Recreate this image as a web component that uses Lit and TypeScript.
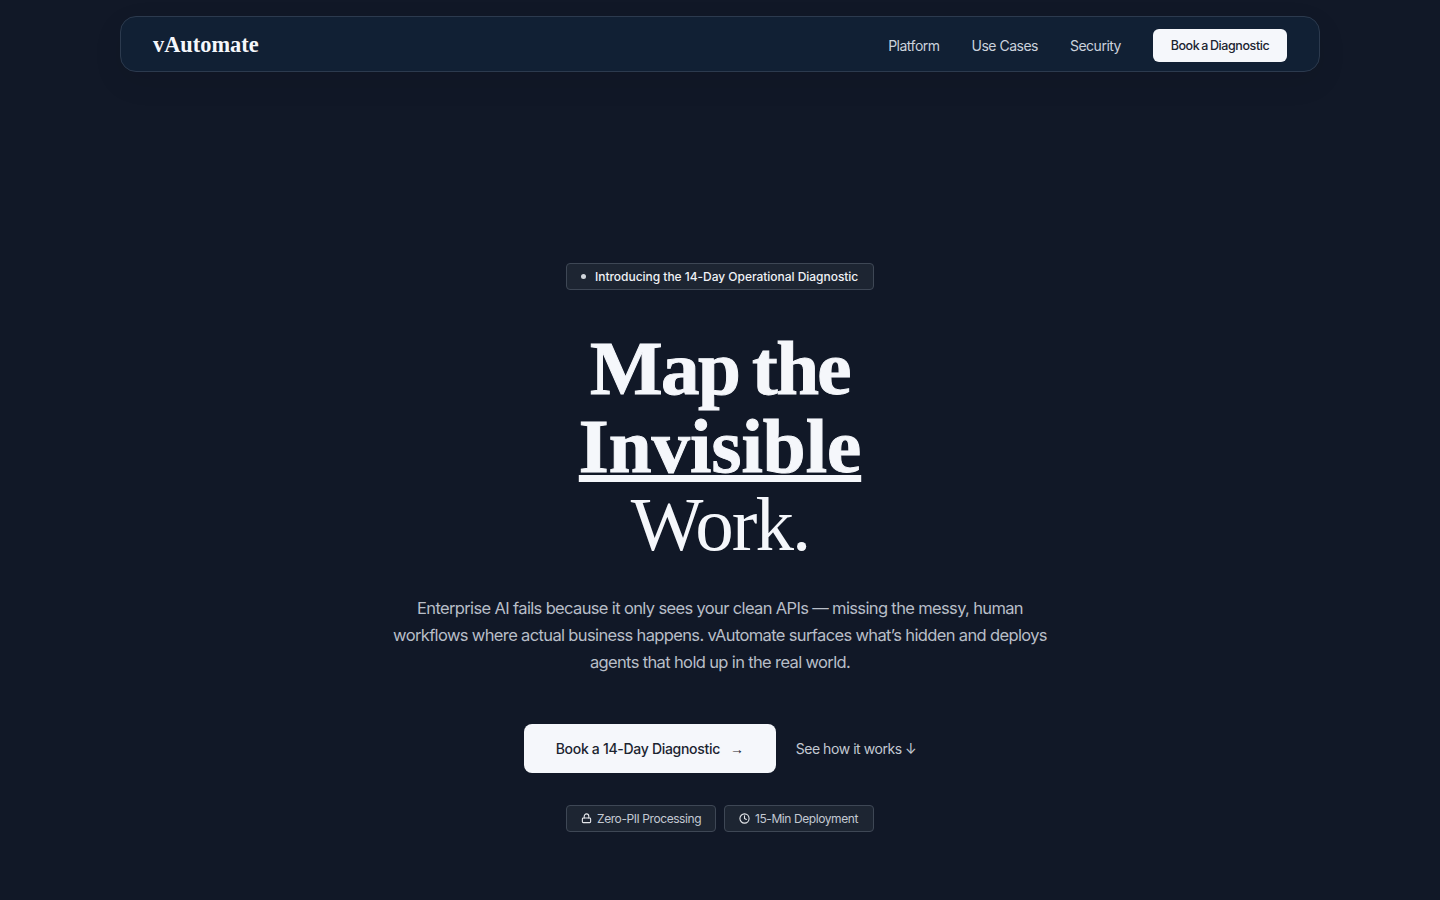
import { LitElement, html, css } from "lit";
import { customElement } from "lit/decorators.js";

@customElement("app-root")
export class AppRoot extends LitElement {
  static styles = css`
    :host { display: block; min-height: 900px; background: #111827; color: #f5f7fb; font-family: "Inter", "Noto Sans", sans-serif; }
    .page { height: 900px; box-sizing: border-box; padding-top: 16px; display: flex; flex-direction: column; align-items: center; overflow: hidden; }
    nav { width: 1200px; height: 56px; box-sizing: border-box; padding: 2px 32px 0; display: flex; align-items: center; justify-content: space-between; background: #112034; border: 1px solid #2c3a4e; border-radius: 16px; box-shadow: 0 10px 30px rgba(0,0,0,.08); }
    .logo { font-family: "Liberation Serif", serif; font-weight: 700; font-size: 22.4px; color: #f5f7fb; }
    .links { display: flex; align-items: center; gap: 32px; }
    .links a { font-size: 14px; color: #cbd2dc; letter-spacing: -0.5px; }
    .links .cta { background: #f5f7fb; color: #1b2430; font-size: 12.5px; font-weight: 500; border-radius: 6px; height: 33px; width: 134px; display: flex; align-items: center; justify-content: center; letter-spacing: -0.4px; word-spacing: -1px; }
    main { display: flex; flex-direction: column; align-items: center; padding-top: 191px; }
    .badge { height: 27px; width: 308px; box-sizing: border-box; display: flex; align-items: center; padding-left: 14px; gap: 9px; border: 1px solid #3e4755; border-radius: 4px; background: #1d2532; font-size: 12px; font-weight: 500; color: #f0f2f6; letter-spacing: -0.03px; white-space: nowrap; }
    .dot { width: 5px; height: 5px; border-radius: 50%; background: #d1d5db; flex: none; }
    h1 { margin: 39px 0 0; font-family: "Liberation Serif", serif; font-size: 77px; line-height: 78px; font-weight: 700; text-align: center; color: #f5f7fb; }
    h1 span { display: block; height: 78px; }
    .bold { -webkit-text-stroke: 1px #f5f7fb; }
    .tight { letter-spacing: -1.6px; word-spacing: -4.8px; }
    h1 u { text-decoration: underline; text-decoration-thickness: 7px; text-underline-offset: 3px; text-decoration-skip-ink: none; }
    h1 .light { font-weight: 400; letter-spacing: -2px; }
    p { margin: 32px 0 0; width: 664px; text-align: center; font-size: 16.5px; line-height: 27px; color: #b8bec8; letter-spacing: -0.64px; }
    .actions { margin-top: 48px; display: flex; align-items: center; gap: 20px; }
    .primary { width: 252px; height: 49px; background: #f5f7fb; color: #1b2430; border-radius: 8px; display: flex; align-items: center; padding-left: 32px; gap: 10px; font-size: 14px; font-weight: 500; box-sizing: border-box; letter-spacing: -0.3px; }
    .arrow { font-family: "Liberation Sans", sans-serif; font-size: 14px; font-weight: 400; padding-top: 1px; }
    .secondary { font-size: 14px; color: #c3c9d2; letter-spacing: -0.45px; }
    .chips { margin-top: 32px; display: flex; gap: 8px; }
    .chip { height: 27px; width: 150px; box-sizing: border-box; display: flex; align-items: center; padding-left: 14px; gap: 5px; border: 1px solid #3e4755; border-radius: 4px; background: #1d2532; font-size: 12px; color: #c3c9d2; letter-spacing: -0.42px; white-space: nowrap; }
    svg { width: 11px; height: 11px; fill: none; stroke: #e5e7eb; stroke-width: 2.4; stroke-linecap: round; stroke-linejoin: round; flex: none; }
  `;

  render() {
    return html`<div class="page">
      <nav>
        <div class="logo">vAutomate</div>
        <div class="links">
          <a>Platform</a><a>Use Cases</a><a>Security</a>
          <a class="cta">Book a Diagnostic</a>
        </div>
      </nav>
      <main>
        <div class="badge"><i class="dot"></i>Introducing the 14-Day Operational Diagnostic</div>
        <h1><span class="bold tight">Map the</span><span class="bold"><u>Invisible</u></span><span class="light">Work.</span></h1>
        <p>Enterprise AI fails because it only sees your clean APIs — missing the messy, human workflows where actual business happens. vAutomate surfaces what’s hidden and deploys agents that hold up in the real world.</p>
        <div class="actions">
          <a class="primary">Book a 14-Day Diagnostic <span class="arrow">→</span></a>
          <a class="secondary">See how it works ↓</a>
        </div>
        <div class="chips">
          <div class="chip"><svg viewBox="0 0 24 24"><rect x="3" y="11" width="18" height="10" rx="2"/><path d="M7 11V7a5 5 0 0 1 10 0v4"/></svg>Zero-PII Processing</div>
          <div class="chip"><svg viewBox="0 0 24 24"><circle cx="12" cy="12" r="10"/><path d="M12 6v6l4 2"/></svg>15-Min Deployment</div>
        </div>
      </main>
    </div>`;
  }
}
